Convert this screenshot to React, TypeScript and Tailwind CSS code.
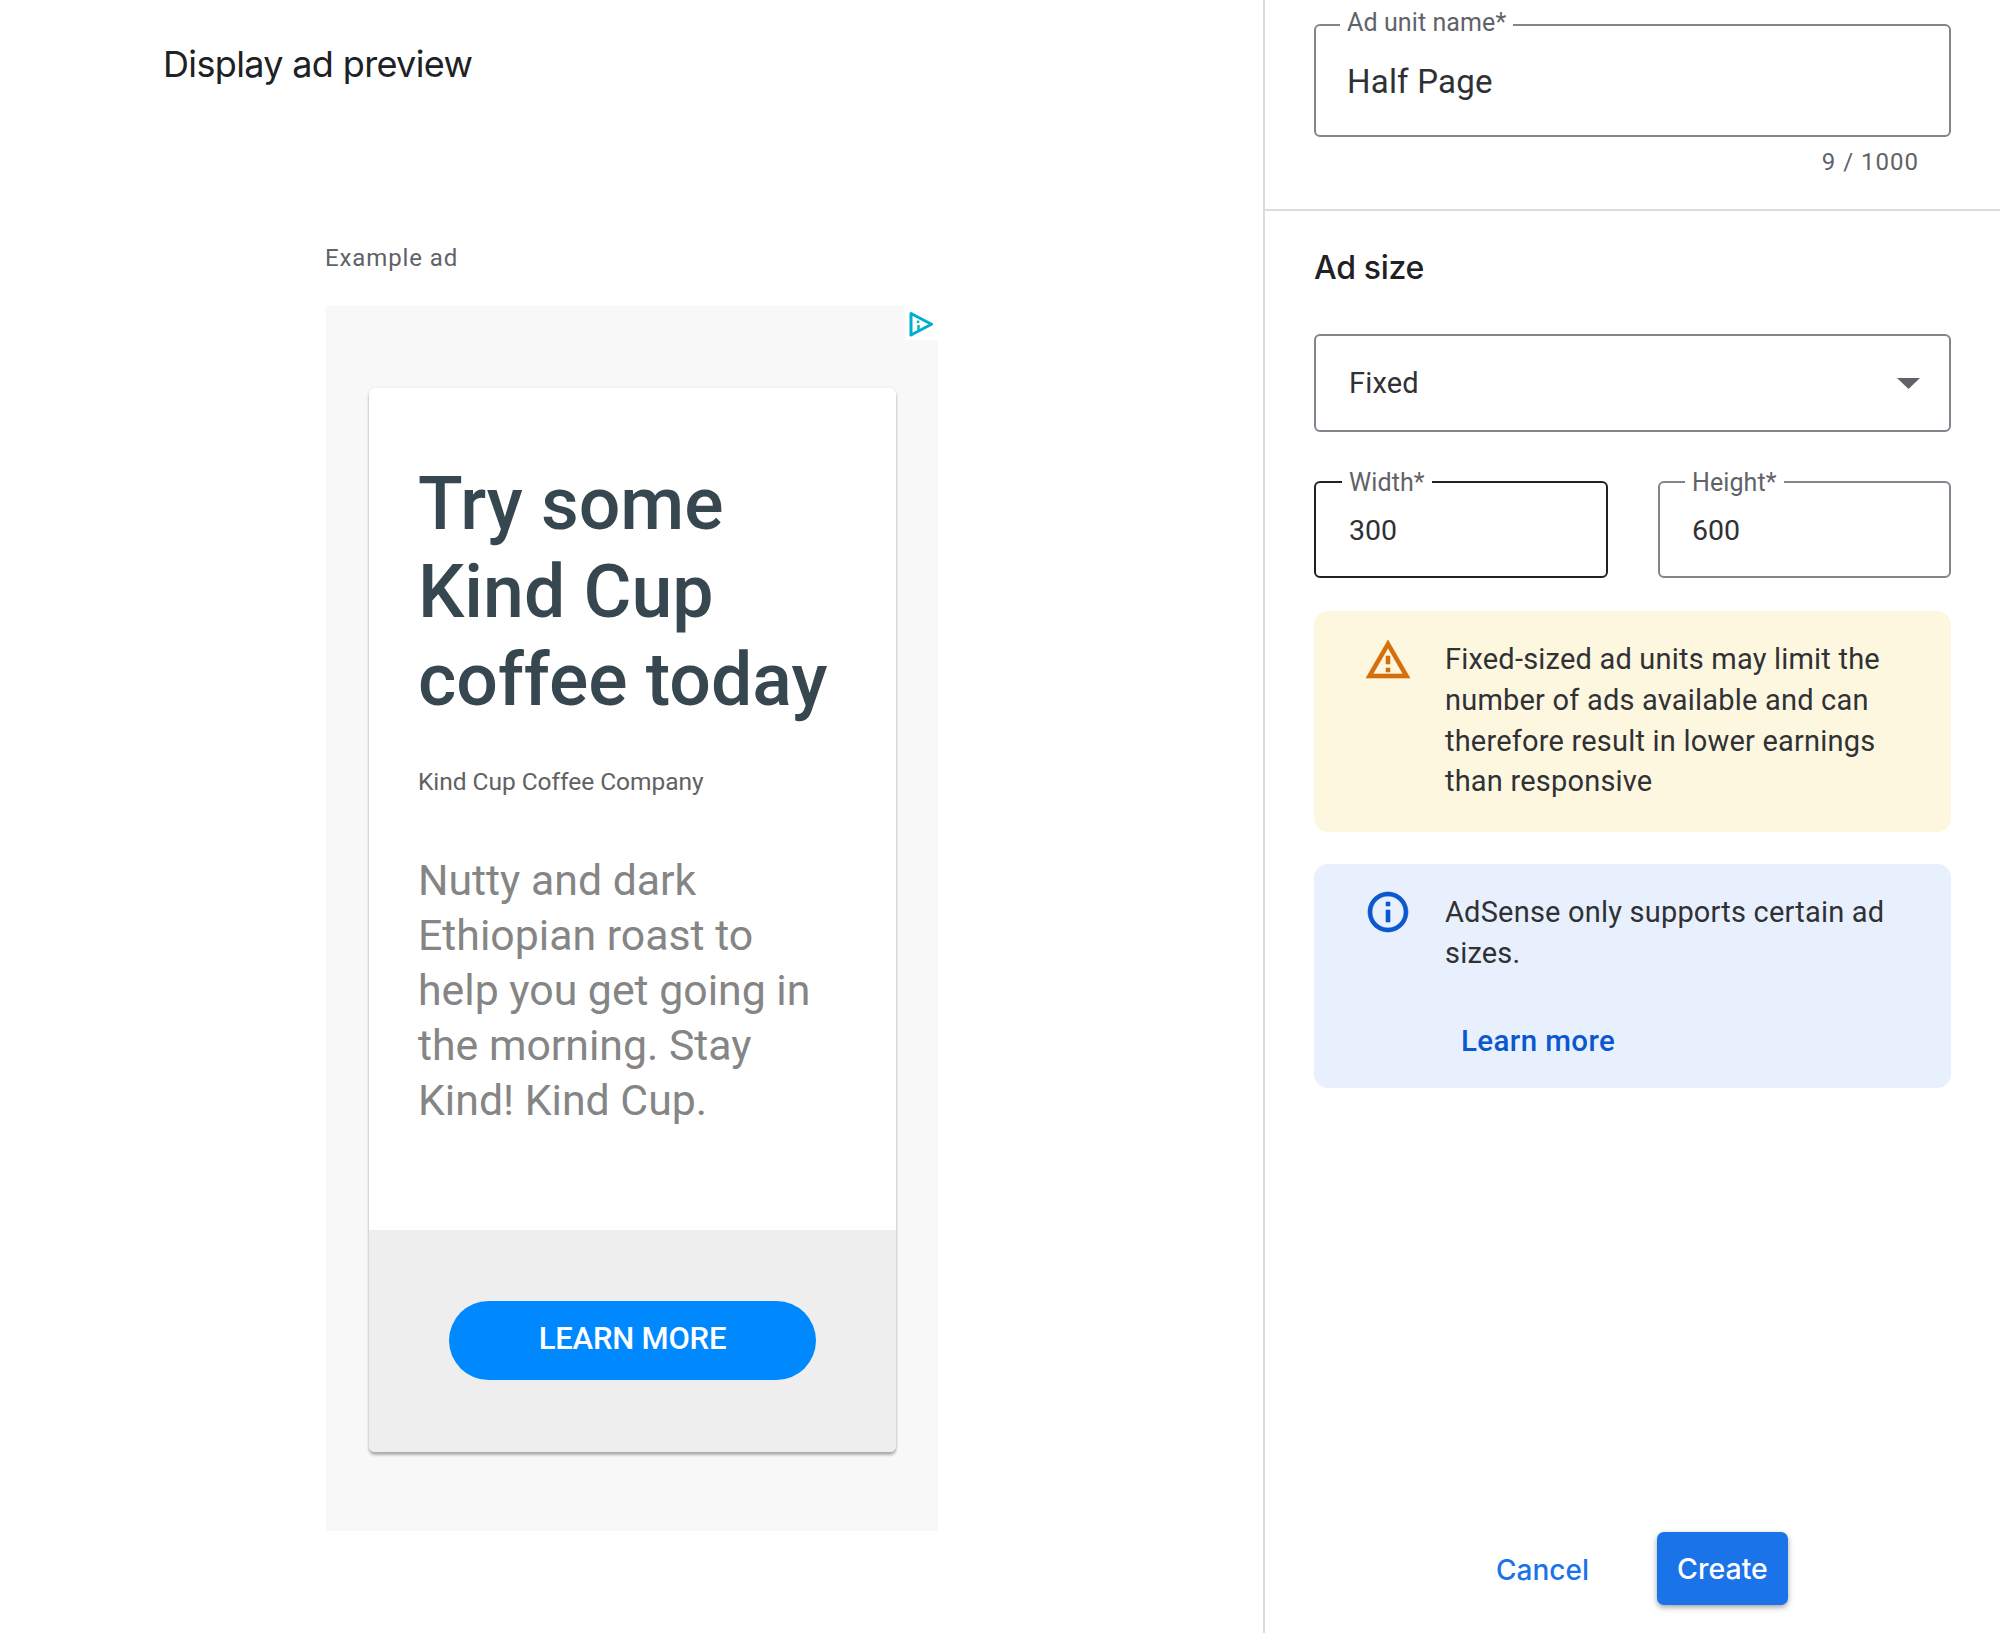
import React from "react";

function Field({ label, value, className, border, inputClass, labelClass }: { label: string; value: string; className: string; border: string; inputClass: string; labelClass: string }) {
  return (
    <div className={`relative rounded-[6px] border-2 flex items-center ${border} ${className}`}>
      <span className={`absolute bg-white px-[7px] text-[#5f6368] text-[25px] leading-[30px] tracking-[0.1px] whitespace-nowrap ${labelClass}`}>{label}</span>
      <span className={`text-[#303134] ${inputClass}`}>{value}</span>
    </div>
  );
}

export default function App() {
  return (
    <div className="w-[2000px] h-[1633px] overflow-hidden bg-white flex font-['Roboto',sans-serif]">
      {/* Left: preview */}
      <div className="w-[1263px] shrink-0 flex flex-col">
        <h1 className="ml-[163px] mt-[40px] font-['Inter',sans-serif] text-[36px] leading-[48px] font-normal tracking-[-0.65px] text-[#202124]">Display ad preview</h1>
        <div className="ml-[325px] mt-[154px] text-[24px] leading-[32px] tracking-[0.9px] text-[#5f6368]">Example ad</div>
        <div className="relative ml-[326px] mt-[32px] w-[612px] h-[1225px] bg-[#f8f8f8] pt-[82px] pl-[43px]">
          <div className="absolute top-0 right-0 w-[33px] h-[34px] bg-white flex items-center justify-center">
            <svg width="28" height="28" viewBox="0 0 28 28" fill="none">
              <path d="M3 4.5 L23.5 15.25 L3 26 Z" stroke="#00aecd" strokeWidth="3" strokeLinejoin="round" />
              <path d="M10.5 16v7" stroke="#00aecd" strokeWidth="2.4" />
              <circle cx="10" cy="12.8" r="1.4" fill="#00aecd" />
            </svg>
          </div>
          <div className="w-[527px] h-[1064px] bg-white rounded-[6px] overflow-hidden flex flex-col shadow-[0_3px_3px_rgba(0,0,0,0.3),0_0_3px_rgba(0,0,0,0.08)]">
            <div className="h-[842px] shrink-0 pl-[49px] pt-[72px]">
              <div className="text-[73.4px] leading-[88px] font-medium text-[#37474f]">
                <div>Try some</div>
                <div>Kind Cup</div>
                <div>coffee today</div>
              </div>
              <div className="mt-[42px] text-[24.5px] leading-[32px] text-[#616161] tracking-[-0.04px]">Kind Cup Coffee Company</div>
              <div className="mt-[54.5px] text-[42.8px] leading-[55.2px] text-[#858585] w-[470px]">
                <div>Nutty and dark</div>
                <div>Ethiopian roast to</div>
                <div>help you get going in</div>
                <div>the morning. Stay</div>
                <div>Kind! Kind Cup.</div>
              </div>
            </div>
            <div className="flex-1 bg-[#eeeeee] flex justify-center pt-[71px]">
              <div className="w-[367px] h-[79px] rounded-full bg-[#0088ff] text-white text-[31px] font-medium flex items-center justify-center tracking-[-0.2px] pb-[3px]">LEARN MORE</div>
            </div>
          </div>
        </div>
      </div>

      {/* Right: form */}
      <div className="flex-1 h-full border-l-2 border-[#dadce0] flex flex-col">
        <div className="h-[211px] shrink-0 border-b-2 border-[#dadce0] px-[49px] pt-[24px]">
          <Field label="Ad unit name*" value="Half Page" border="border-[#80868b]" className="h-[113px] pl-[31px] pt-[2px]" inputClass="text-[33px] tracking-[0.2px]" labelClass="left-[24px] -top-[18px]" />
          <div className="mt-[9px] pr-[32px] text-right text-[24px] leading-[32px] tracking-[1px] text-[#5f6368]">9 / 1000</div>
        </div>
        <div className="px-[49px] flex-1 flex flex-col">
          <h2 className="mt-[37px] font-['Inter',sans-serif] text-[32px] leading-[40px] font-medium tracking-[-0.3px] text-[#202124]">Ad size</h2>
          <div className="mt-[46px] h-[98px] rounded-[6px] border-2 border-[#80868b] flex items-center justify-between pl-[33px] pr-[29px] pt-[2px]">
            <span className="text-[29px] tracking-[0.2px] text-[#303134]">Fixed</span>
            <svg className="mt-[-2px]" width="23" height="11" viewBox="0 0 23 11"><path d="M0 0h23L11.5 11z" fill="#5f6368" /></svg>
          </div>
          <div className="mt-[49px] flex gap-[50px]">
            <Field label="Width*" value="300" border="border-[#202124]" className="flex-1 h-[97px] pl-[33px] pt-[4px]" inputClass="text-[28.5px]" labelClass="left-[26px] -top-[15px]" />
            <Field label="Height*" value="600" border="border-[#80868b]" className="flex-1 h-[97px] pl-[32px] pt-[4px]" inputClass="text-[28.5px]" labelClass="left-[25px] -top-[15px]" />
          </div>
          <div className="mt-[33px] h-[221px] rounded-[14px] bg-[#fef7e0] flex pl-[50px] pt-[28px]">
            <svg className="shrink-0 mt-[-3px]" width="48" height="48" viewBox="0 0 24 24" fill="#d56e0c" stroke="#d56e0c" strokeWidth="0.3"><path d="M1 21h22L12 2 1 21zm3.47-2L12 5.99 19.53 19H4.47zM11 16h2v2h-2zm0-6h2v4h-2z" /></svg>
            <div className="ml-[33px] text-[29px] leading-[40.8px] tracking-[0.2px] text-[#303134] whitespace-nowrap">
              <div>Fixed-sized ad units may limit the</div>
              <div>number of ads available and can</div>
              <div>therefore result in lower earnings</div>
              <div>than responsive</div>
            </div>
          </div>
          <div className="mt-[32px] h-[224px] rounded-[14px] bg-[#e8f0fe] flex pl-[50px] pt-[28px]">
            <svg className="shrink-0 mt-[-4px]" width="48" height="48" viewBox="0 0 24 24" fill="#0b57d0" stroke="#0b57d0" strokeWidth="0.3"><path d="M11 7h2v2h-2zm0 4h2v6h-2zm1-9C6.48 2 2 6.48 2 12s4.48 10 10 10 10-4.48 10-10S17.52 2 12 2zm0 18c-4.41 0-8-3.59-8-8s3.59-8 8-8 8 3.59 8 8-3.59 8-8 8z" /></svg>
            <div className="ml-[33px] text-[29px] leading-[40.8px] tracking-[0.2px] text-[#303134] whitespace-nowrap">
              <div>AdSense only supports certain ad</div>
              <div>sizes.</div>
              <div className="mt-[47px] ml-[16px] text-[29.5px] text-[#0b57d0] font-medium tracking-[0.4px]">Learn more</div>
            </div>
          </div>
          <div className="mt-[444px] flex items-center pl-[182px]">
            <span className="font-['Inter',sans-serif] text-[28px] text-[#1a73e8] font-medium pt-[2px]">Cancel</span>
            <div className="ml-[68px] w-[131px] h-[73px] rounded-[7px] bg-[#1a73e8] text-white font-['Inter',sans-serif] text-[28.5px] font-medium flex items-center justify-center pt-[1px] shadow-[0_2px_4px_rgba(60,64,67,0.35),0_3px_8px_rgba(60,64,67,0.18)]">Create</div>
          </div>
        </div>
      </div>
    </div>
  );
}
